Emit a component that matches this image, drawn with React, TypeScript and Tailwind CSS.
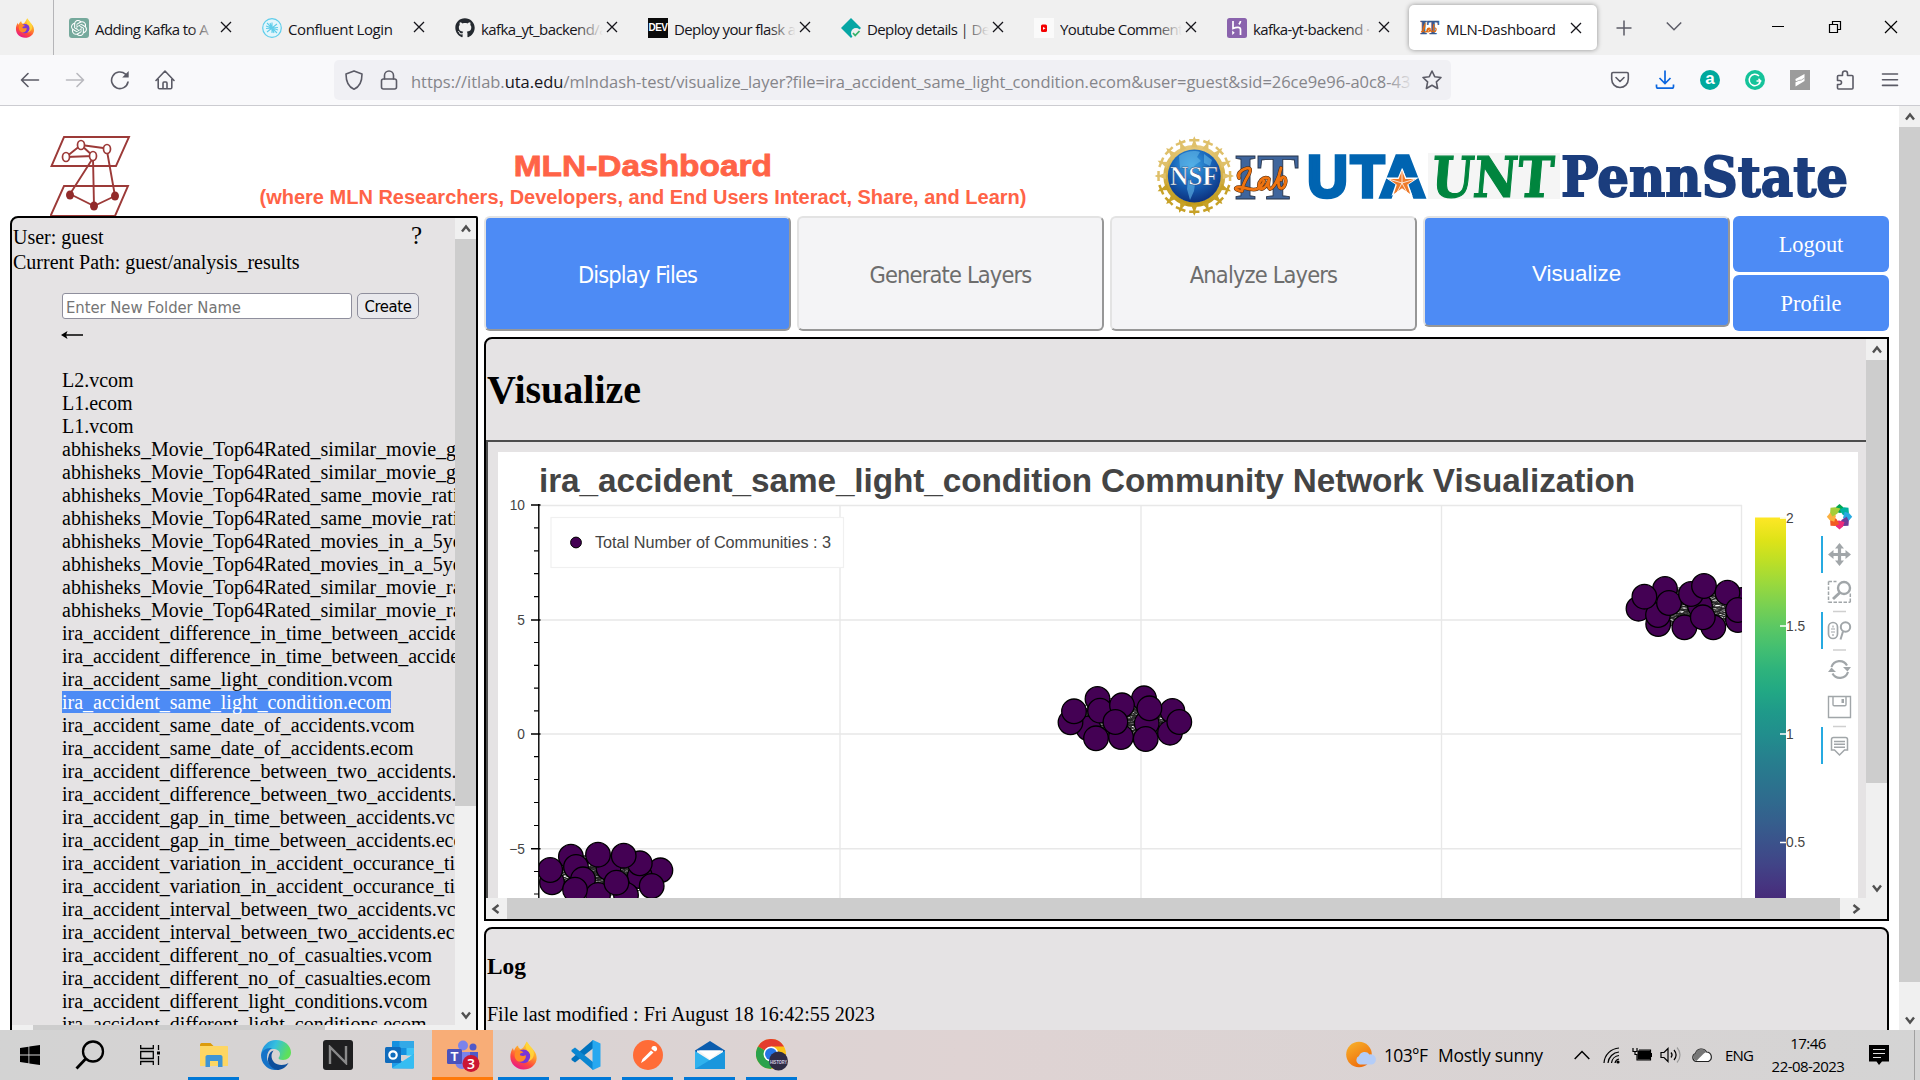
import React from "react";
import { FaGithub } from "react-icons/fa";
import { SiOpenai } from "react-icons/si";

const UI = "font-['Open_Sans','Noto_Sans',sans-serif]";
const SERIF = "font-['Liberation_Serif',serif]";
const TAHOMA = "font-['DejaVu_Sans_Condensed','DejaVu_Sans',sans-serif]";

/* ---------- shared pieces ---------- */

function Firefox({ className }: { className: string }) {
  return (
    <svg viewBox="0 0 32 32" className={className}>
      <defs>
        <linearGradient id="ffBody" x1="0.8" y1="0" x2="0.3" y2="1">
          <stop offset="0" stopColor="#ffe53f" />
          <stop offset="0.4" stopColor="#ffa12b" />
          <stop offset="0.7" stopColor="#ff4a3d" />
          <stop offset="1" stopColor="#e6168c" />
        </linearGradient>
      </defs>
      <path d="M19.5 0.5c2 2.500 3 4.500 4.500 6.500c3 3 6.500 6 6.500 12C30.500 26 24 31.500 16 31.500S1.500 25.500 1.500 17.500c0-4 1-7 3-10c0 1.500.5 2.500 1 3.200C6.500 8 8 6 10 5c0 2 1 3.500 3 4c3-.5 4.500-5 6.500-8.500z" fill="url(#ffBody)" />
      <circle cx="16" cy="17" r="7.500" fill="#7a36d8" />
      <path d="M7 12c4-3 8-1 9 1c-2 0-4 .5-4 2c0 2 5 2 6 .5c2 2-1 8-6 7.500c-5-1-7-6-5-11z" fill="#ff8a26" />
      <path d="M19.500 1c-2 5-1 8 2.500 11c3 4 1 9-2 11c5-1 9-6 7-12c-1-4-5-6-7.500-10z" fill="#ffd83c" opacity=".85" />
    </svg>
  );
}

function Chev({ dir }: { dir: "up" | "down" | "left" | "right" }) {
  const d = {
    up: "M2 8.500L6 3.500L10 8.500",
    down: "M2 3.500L6 8.500L10 3.500",
    left: "M8.500 2L3.500 6L8.500 10",
    right: "M3.500 2L8.500 6L3.500 10",
  }[dir];
  return (
    <svg viewBox="0 0 12 12" className="h-3 w-3">
      <path d={d} fill="none" stroke="#505050" strokeWidth="2.400" />
    </svg>
  );
}

/* ---------- browser chrome ---------- */

const TabX = () => (
  <svg viewBox="0 0 12 12" className="h-3 w-3 shrink-0">
    <path d="M1 1L11 11M11 1L1 11" stroke="#15141a" strokeWidth="1.300" />
  </svg>
);

function ItLabIcon() {
  return (
    <svg viewBox="0 0 20 20" className="h-5 w-5">
      <text x="0" y="16" textLength="19" lengthAdjust="spacingAndGlyphs" fontFamily="Liberation Serif" fontWeight="700" fontSize="19" fill="#35598f" stroke="#35598f" strokeWidth="0.600">IT</text>
      <path d="M1 14c4-1 4-6 4-8c-2 3-3 8 0 8c2 0 3-1 4-4c-2 0-3 4-1 4s2-3 2-4c0 3 1 4 3 3c1-2 1-5 1-7c-1 3-1 7 0 8c2 0 3-4 1-4" fill="none" stroke="#e06a10" strokeWidth="1.200" />
    </svg>
  );
}

const tabs: { title: string; icon: React.ReactNode; fade: boolean }[] = [
  {
    title: "Adding Kafka to A",
    fade: true,
    icon: (
      <span className="flex h-5 w-5 items-center justify-center rounded-[3px] bg-[#75a99c]">
        <SiOpenai className="h-4 w-4 text-white" />
      </span>
    ),
  },
  {
    title: "Confluent Login",
    fade: false,
    icon: (
      <svg viewBox="0 0 20 20" className="h-5 w-5">
        <circle cx="10" cy="10" r="9.300" fill="#e3f6fc" stroke="#5fcdea" strokeWidth="1.200" />
        <path d="M10 10L5 5M10 10L4 8M10 10L4 10.500M10 10L8 5M10 10L15 15M10 10L16 12M10 10L16 9.500M10 10L12 15M10 10l-5 4M10 10l5-4M10 10V4.500M10 10v5" stroke="#5fcdea" strokeWidth="1.100" />
      </svg>
    ),
  },
  { title: "kafka_yt_backend/a", fade: true, icon: <FaGithub className="h-5 w-5 text-[#24292f]" /> },
  {
    title: "Deploy your flask a",
    fade: true,
    icon: (
      <span className="flex h-5 w-5 items-center justify-center bg-[#0a0a0a] font-['Liberation_Sans'] text-[10px] font-bold tracking-[-0.5px] text-white">DEV</span>
    ),
  },
  {
    title: "Deploy details | De",
    fade: true,
    icon: (
      <svg viewBox="0 0 20 20" className="h-5 w-5">
        <path d="M10 0L20 10L10 20L0 10z" fill="#05a6a4" />
        <circle cx="15" cy="15" r="5" fill="#f0f0f0" />
        <path d="M12 15l2.200 2.500L18.500 13" fill="none" stroke="#35b26a" strokeWidth="1.800" />
      </svg>
    ),
  },
  {
    title: "Youtube Comment",
    fade: true,
    icon: (
      <svg viewBox="0 0 20 20" className="h-5 w-5">
        <rect width="20" height="20" fill="#fafafa" />
        <rect x="7" y="6.500" width="6" height="7.500" rx="1.500" fill="#f40000" />
        <path d="M9 9l2.500 1.300L9 11.700z" fill="#fff" />
      </svg>
    ),
  },
  {
    title: "kafka-yt-backend ·",
    fade: true,
    icon: (
      <svg viewBox="0 0 20 20" className="h-5 w-5">
        <rect width="20" height="20" rx="2.500" fill="#8a63ad" />
        <path d="M6 3v7.500c3-1.300 7.500-2 7.500 1V17M13.500 3c0 1.500-.8 2.500-1.600 3.300" fill="none" stroke="#fff" strokeWidth="1.700" />
        <path d="M5.200 12.500l2.500 2.200l-2.500 2.200z" fill="#fff" />
      </svg>
    ),
  },
];

const tabText = "whitespace-nowrap text-[15px] leading-5 text-[#15141a]";

function TabBar() {
  return (
    <div className={`flex h-[55px] bg-[#f0f0f0] ${UI}`}>
      <div className="flex w-[54px] items-center border-r border-[#b5b5b8] pl-[15px]">
        <Firefox className="h-5 w-5" />
      </div>
      <div className="flex pl-[4px]">
        {tabs.map((t) => (
          <div key={t.title} className="flex w-[193px] items-center pl-[11px]">
            {t.icon}
            <div className={`relative ml-[6px] w-[122px] overflow-hidden pt-[2px] ${t.fade ? "tracking-[-0.6px]" : "tracking-[-0.4px]"} ${tabText}`}>
              {t.title}
              {t.fade && <span className="absolute inset-y-0 right-0 w-7 bg-gradient-to-r from-transparent to-[#f0f0f0]" />}
            </div>
            <span className="-mt-px ml-[3px]">
              <TabX />
            </span>
          </div>
        ))}
        <div className="mt-[5px] flex h-[45px] w-[188px] items-center rounded-[5px] bg-white pl-[11px] shadow-[0_0_5px_rgba(0,0,0,0.4)]">
          <ItLabIcon />
          <div className={`ml-[6px] w-[124px] pt-[2px] tracking-[-0.4px] ${tabText}`}>MLN-Dashboard</div>
          <TabX />
        </div>
      </div>
      <div className="flex flex-1 items-center pl-[19px]">
        <svg viewBox="0 0 16 16" className="h-4 w-4">
          <path d="M8 0.500V15.500M.5 8H15.500" stroke="#5b5b66" strokeWidth="1.500" />
        </svg>
        <svg viewBox="0 0 16 16" className="-mt-1 ml-[34px] h-4 w-4">
          <path d="M.8 4.500L8 11.800L15.200 4.500" fill="none" stroke="#5b5b66" strokeWidth="1.500" />
        </svg>
        <svg viewBox="0 0 126 14" className="-mt-[2px] ml-[90px] h-[14px] w-[126px]">
          <path d="M0 6.500H12M113 1l12 12M125 1l-12 12" stroke="#000" strokeWidth="1.200" />
          <path d="M57.500 4.500h8v8h-8zM60.500 4V1.500h8v8H66" fill="none" stroke="#000" strokeWidth="1.200" />
        </svg>
      </div>
    </div>
  );
}

function NavBar() {
  const s = { fill: "none", stroke: "#5b5b66", strokeWidth: 1.6, strokeLinecap: "round" as const, strokeLinejoin: "round" as const };
  return (
    <div className={`flex h-[51px] items-center border-b border-[#ccccd1] bg-[#f9f9fb] ${UI}`}>
      <div className="flex w-[334px] items-center gap-[25px] pl-[20px]">
        <svg viewBox="0 0 20 20" className="h-5 w-5"><path {...s} d="M18.500 10H1.500M8 3.500L1.500 10L8 16.500" /></svg>
        <svg viewBox="0 0 20 20" className="h-5 w-5 opacity-40"><path {...s} d="M1.500 10h17M12 3.500L18.500 10L12 16.500" /></svg>
        <svg viewBox="0 0 20 20" className="h-5 w-5">
          <path {...s} d="M18 12A8.300 8.300 0 1 1 15.500 4.200" />
          <path d="M18.700 1v6.500h-6.500z" fill="#5b5b66" />
        </svg>
        <svg viewBox="0 0 20 20" className="h-5 w-5">
          <path {...s} d="M1 10.500L10 1l9 9.500M3.200 9v8.500c0 .8.500 1.300 1.300 1.300h11c.8 0 1.300-.5 1.300-1.300V9M8 18.500v-5.300c0-.8.4-1.200 1-1.200h2c.6 0 1 .4 1 1.200v5.300" />
        </svg>
      </div>
      <div className="flex h-10 w-[1117px] items-center rounded-[5px] bg-[#f0f0f4] pl-[10px]">
        <svg viewBox="0 0 20 20" className="h-5 w-5"><path {...s} d="M10 .9L18 4c0 7-2.500 13-8 15.200C4.500 17 2 11 2 4z" /></svg>
        <svg viewBox="0 0 20 20" className="ml-[15px] h-5 w-5">
          <rect {...s} x="2.500" y="9" width="15" height="10" rx="2" />
          <path {...s} d="M5.500 9V5.500a4.500 4.500 0 0 1 9 0V9" />
        </svg>
        <div className="relative ml-[12px] mt-[3px] w-[1003px] overflow-hidden whitespace-nowrap text-[16.500px] leading-6 tracking-[-0.03px] text-[#85858a]">
          https://itlab.<span className="text-[#15141a]">uta.edu</span>/mlndash-test/visualize_layer?file=ira_accident_same_light_condition.ecom&amp;user=guest&amp;sid=26ce9e96-a0c8-43
          <span className="absolute inset-y-0 right-0 w-7 bg-gradient-to-r from-transparent to-[#f0f0f4]" />
        </div>
        <svg viewBox="0 0 20 20" className="ml-[8px] h-5 w-5"><path {...s} d="M10 1l2.700 5.700l6.300.8l-4.600 4.300l1.200 6.700L10 15.300L4.400 18.500l1.200-6.700L1 7.500l6.300-.8z" /></svg>
      </div>
      <div className="flex flex-1 items-center gap-[25px] pl-[159px]">
        <svg viewBox="0 0 20 20" className="h-5 w-5">
          <path {...s} d="M3 2.500h14c.7 0 1.300.5 1.300 1.200V9c0 5-3.700 8.500-8.300 8.500S1.700 14 1.700 9V3.700C1.700 3 2.300 2.500 3 2.500zM6 7.500L10 11.500L14 7.500" />
        </svg>
        <svg viewBox="0 0 20 20" className="h-5 w-5">
          <path d="M10 .5V13M4.500 8L10 13.500L15.500 8M1.500 14.500v2c0 1 .7 1.700 1.700 1.700h13.600c1 0 1.700-.7 1.700-1.700v-2" fill="none" stroke="#0a66e0" strokeWidth="1.700" />
        </svg>
        <span className="flex h-5 w-5 items-center justify-center rounded-full bg-[#00a99d] pb-[2px] font-['Liberation_Sans'] text-[17px] font-bold leading-5 text-white">a</span>
        <svg viewBox="0 0 20 20" className="h-5 w-5">
          <circle cx="10" cy="10" r="10" fill="#15c39a" />
          <path d="M14 6A5.700 5.700 0 1 0 15.500 11H11.500M13.500 8.800l2.200 2.200l-1.700 2.500" fill="none" stroke="#fff" strokeWidth="1.500" />
        </svg>
        <svg viewBox="0 0 20 20" className="h-5 w-5">
          <rect width="20" height="20" fill="#9c9c9c" />
          <path d="M14.500 4v4.500L8 12.500L5.500 10.500V9zM14.500 8v3L5.500 16.500V12z" fill="#fff" />
          <path d="M5.500 12l3-1.500l3-.5l3-2" stroke="#9c9c9c" strokeWidth="0.800" fill="none" />
        </svg>
        <svg viewBox="0 0 20 20" className="h-5 w-5">
          <path {...s} d="M7.500 5.500V3.500a2.500 2.500 0 0 1 5 0v2h4.500c.7 0 1 .4 1 1V18c0 .7-.4 1-1 1H3.500c-.6 0-1-.3-1-1v-3.500h2a2 2 0 0 0 0-4h-2V6.500c0-.6.400-1 1-1z" />
        </svg>
        <svg viewBox="0 0 20 20" className="h-5 w-5"><path {...s} d="M2.500 4h15M2.500 9.700h15M2.500 15.400h15" /></svg>
      </div>
    </div>
  );
}

/* ---------- page header ---------- */

function MlnLogo() {
  return (
    <svg viewBox="50 135 82 82" className="h-[82px] w-[82px]">
      <g fill="none" stroke="#9c3a38" strokeWidth="1.900">
        <path d="M64 137h65l-13 29H51.500zM64 186h64l-13 30H50.500z" />
        <path d="M81 145l26 3.500M81 145l-15 12M81 145l12 11M66 157l27-1M93 158L70 194M93 158l1 48M107 151l8 45M70 194l24 12l21-10" />
      </g>
      <g fill="#fff" stroke="#9c3a38" strokeWidth="1.700">
        <ellipse cx="81" cy="145" rx="3.500" ry="4.500" />
        <ellipse cx="107" cy="149" rx="3.500" ry="4.500" />
        <ellipse cx="66" cy="157" rx="3.500" ry="4.500" />
        <ellipse cx="93" cy="156" rx="3.500" ry="4.500" />
      </g>
      <g fill="#922b2b">
        <ellipse cx="70" cy="195" rx="4" ry="4.500" />
        <ellipse cx="94" cy="206" rx="4" ry="4.500" />
        <ellipse cx="115" cy="196" rx="4" ry="4.500" />
      </g>
    </svg>
  );
}

function SponsorLogos() {
  const spokes = Array.from({ length: 16 }, (_, i) => i * 22.5);
  return (
    <svg viewBox="1150 130 710 86" className="h-[86px] w-[710px]">
      <defs>
        <radialGradient id="globe" cx="0.45" cy="0.3" r="0.75">
          <stop offset="0" stopColor="#3ba4e4" />
          <stop offset="0.5" stopColor="#1763b8" />
          <stop offset="1" stopColor="#0b2a75" />
        </radialGradient>
        <linearGradient id="gold" x1="0" y1="0" x2="0" y2="1">
          <stop offset="0" stopColor="#e6c878" />
          <stop offset="1" stopColor="#c09a18" />
        </linearGradient>
      </defs>
      <circle cx="1194.300" cy="176" r="28.500" fill="none" stroke="url(#gold)" strokeWidth="5" />
      {spokes.map((a) => (
        <g key={a} transform={`rotate(${a} 1194.300 176)`} fill={a > 90 && a < 270 ? "#c7a127" : "#dfc06a"}>
          <path d="M1191 147.500l2.200-6h-4l0-2.500h3.800l1.300-2.700l1.300 2.700h3.800v2.500h-4l2.200 6z" />
        </g>
      ))}
      <circle cx="1194.300" cy="176" r="26.500" fill="url(#globe)" />
      <path d="M1179 156c6-5 16-6 21-4l-3 5l4 4l-6 4l-4 6l-5-4l-6 1z M1204 154l8 6l-2 6l-6-3zM1188 180l7 4l-1 7l-4 9l-3-11z" fill="#62b8e8" opacity=".6" />
      <text x="1170" y="185" textLength="48" lengthAdjust="spacingAndGlyphs" fontFamily="Liberation Serif" fontWeight="700" fontSize="28" fill="#fff" stroke="#23477f" strokeWidth="0.500">NSF</text>
      <text x="1234" y="198.500" textLength="23" lengthAdjust="spacingAndGlyphs" fontFamily="Liberation Serif" fontWeight="700" fontSize="65" fill="#3f659c" stroke="#27344a" strokeWidth="0.900">I</text>
      <text x="1257" y="198.500" textLength="42" lengthAdjust="spacingAndGlyphs" fontFamily="Liberation Serif" fontWeight="700" fontSize="65" fill="#3f659c" stroke="#27344a" strokeWidth="0.900">T</text>
      <g fill="none" stroke="#4a2a12" strokeWidth="3.800" strokeLinecap="round" strokeLinejoin="round">
        <path d="M1239 178c-3-6 8-12 11-9c2 4-7 11-8 22c-4 0-7-2-6-3c4-4 14 4 21 1c4-2 6-5 7-8M1268 178c-5-2-10 4-9 9c2 5 8 0 10-8c-1 5-1 9 1 10c4-1 9-11 11-21c-2 5-4 18-1 20c4 2 7-6 5-10c-2-2-4 0-4 2" />
      </g>
      <g fill="none" stroke="#ef7410" strokeWidth="2.800" strokeLinecap="round" strokeLinejoin="round">
        <path d="M1239 178c-3-6 8-12 11-9c2 4-7 11-8 22c-4 0-7-2-6-3c4-4 14 4 21 1c4-2 6-5 7-8M1268 178c-5-2-10 4-9 9c2 5 8 0 10-8c-1 5-1 9 1 10c4-1 9-11 11-21c-2 5-4 18-1 20c4 2 7-6 5-10c-2-2-4 0-4 2" />
      </g>
      <g fontFamily="Liberation Sans" fontWeight="700" fill="#0064b1" stroke="#0064b1" strokeWidth="3.500">
        <text x="1307" y="197" textLength="41" lengthAdjust="spacingAndGlyphs" fontSize="60">U</text>
        <text x="1350.500" y="197" textLength="34" lengthAdjust="spacingAndGlyphs" fontSize="60">T</text>
        <text x="1379.500" y="197" textLength="46" lengthAdjust="spacingAndGlyphs" fontSize="60">A</text>
      </g>
      <path d="M1402 168l4 9.500h13l-10.500 7l4 11.500l-10.500-7l-10.500 7l4-11.500l-10.500-7h13z" fill="#fff" />
      <path d="M1402 170.500l3.300 8.500h9.700l-7.800 5.700l3 9.300l-8.200-5.700l-8.200 5.700l3-9.300l-7.800-5.700h9.700z" fill="#ee7b2b" />
      <path d="M1402 171.500V183l5 9.500M1402 183l12-3.600M1402 183l-12-3.600M1402 183l-5 9.500" stroke="#fff" strokeWidth="0.800" fill="none" />
      <rect x="1428" y="153" width="132" height="46" fill="#f5f5f5" />
      <g transform="translate(1430 196.500) skewX(-5)">
        <text x="0" y="0" textLength="122" lengthAdjust="spacingAndGlyphs" fontFamily="DejaVu Serif" fontWeight="700" fontSize="56" fill="#00853e" stroke="#00853e" strokeWidth="1.200">UNT</text>
      </g>
      <text x="1561" y="196" textLength="287" lengthAdjust="spacingAndGlyphs" fontFamily="DejaVu Serif" fontWeight="700" fontSize="55" fill="#1b3d7d" stroke="#1b3d7d" strokeWidth="1.800">PennState</text>
    </svg>
  );
}

function PageHeader() {
  return (
    <div className="flex h-[110px] shrink-0 items-start font-['Liberation_Sans',sans-serif] font-bold text-[#ff6347]">
      <div className="ml-[50px] mt-[29px] h-[81px] w-[82px]">
        <MlnLogo />
      </div>
      <div className="ml-[111px] flex w-[800px] flex-col items-center whitespace-nowrap pt-[42px]">
        <div className="origin-center scale-x-[1.115] text-[30px] leading-[36px] [-webkit-text-stroke:0.800px_#ff6347]">MLN-Dashboard</div>
        <div className="mt-px text-[20px] leading-6">(where MLN Researchers, Developers, and End Users Interact, Share, and Learn)</div>
      </div>
      <div className="ml-[107px] mt-[24px]">
        <SponsorLogos />
      </div>
    </div>
  );
}

/* ---------- sidebar ---------- */

const files = [
  "L2.vcom",
  "L1.ecom",
  "L1.vcom",
  "abhisheks_Movie_Top64Rated_similar_movie_genres.vcom",
  "abhisheks_Movie_Top64Rated_similar_movie_genres.ecom",
  "abhisheks_Movie_Top64Rated_same_movie_ratings.vcom",
  "abhisheks_Movie_Top64Rated_same_movie_ratings.ecom",
  "abhisheks_Movie_Top64Rated_movies_in_a_5year_gap.vcom",
  "abhisheks_Movie_Top64Rated_movies_in_a_5year_gap.ecom",
  "abhisheks_Movie_Top64Rated_similar_movie_ratings.vcom",
  "abhisheks_Movie_Top64Rated_similar_movie_ratings.ecom",
  "ira_accident_difference_in_time_between_accidents.vcom",
  "ira_accident_difference_in_time_between_accidents.ecom",
  "ira_accident_same_light_condition.vcom",
  "ira_accident_same_light_condition.ecom",
  "ira_accident_same_date_of_accidents.vcom",
  "ira_accident_same_date_of_accidents.ecom",
  "ira_accident_difference_between_two_accidents.vcom",
  "ira_accident_difference_between_two_accidents.ecom",
  "ira_accident_gap_in_time_between_accidents.vcom",
  "ira_accident_gap_in_time_between_accidents.ecom",
  "ira_accident_variation_in_accident_occurance_time.vcom",
  "ira_accident_variation_in_accident_occurance_time.ecom",
  "ira_accident_interval_between_two_accidents.vcom",
  "ira_accident_interval_between_two_accidents.ecom",
  "ira_accident_different_no_of_casualties.vcom",
  "ira_accident_different_no_of_casualties.ecom",
  "ira_accident_different_light_conditions.vcom",
  "ira_accident_different_light_conditions.ecom",
];

function Sidebar() {
  return (
    <aside className={`flex h-[840px] w-[468px] shrink-0 flex-col overflow-hidden rounded-tl-[8px] rounded-tr-[2px] border-2 border-black bg-[#e5e3e4] text-[20px] text-black ${SERIF}`}>
      <div className="flex h-[807px] shrink-0">
        <div className="w-[443px] overflow-hidden whitespace-nowrap pl-px">
          <div className="flex h-[75px] justify-between pt-[7px]">
            <div className="leading-[25px]">
              <div>User: guest</div>
              <div>Current Path: guest/analysis_results</div>
            </div>
            <div className="-mt-[3px] pr-[33px] text-[25px] leading-[28px]">?</div>
          </div>
          <div className={`ml-[49px] flex h-[26px] gap-[5px] text-[16.500px] ${TAHOMA}`}>
            <div className="w-[290px] rounded-[3px] border border-[#8f8f9d] bg-white pl-[3px] pt-px leading-[25px] tracking-[-0.05px] text-[#757575]">Enter New Folder Name</div>
            <button className="w-[62px] rounded-[5px] border border-[#8f8f9d] bg-[#e9e9ed] pt-[2px] leading-[22px] tracking-[-0.4px]">Create</button>
          </div>
          <svg viewBox="0 0 22 10" className="ml-[48px] mt-[11px] h-[10px] w-[22px]">
            <path d="M22 5H3" stroke="#000" strokeWidth="1.500" />
            <path d="M0 5L6.500 1L5 5L6.500 9z" fill="#000" />
          </svg>
          <ul className="mt-[29px] pl-[49px] leading-[23px]">
            {files.map((f) => (
              <li key={f} className="h-[23px]">
                {f === "ira_accident_same_light_condition.ecom" ? <span className="bg-[#4d8bf5] text-white">{f}</span> : f}
              </li>
            ))}
          </ul>
        </div>
        <div className="flex w-[21px] flex-col items-center bg-[#f0f0f0]">
          <div className="flex h-[21px] items-center"><Chev dir="up" /></div>
          <div className="h-[567px] w-full bg-[#cdcdcd]" />
          <div className="mt-[203px]"><Chev dir="down" /></div>
        </div>
      </div>
      <div className="h-[21px] shrink-0 bg-[#f0f0f0] pl-[21px]">
        <div className="h-full w-[292px] bg-[#cdcdcd]" />
      </div>
    </aside>
  );
}

/* ---------- step buttons ---------- */

function StepButtons() {
  const base = "w-[307px] rounded-[6px] border-2 border-t-[#e3e3e3] border-l-[#e3e3e3] border-b-[#979797] border-r-[#979797]";
  const blue = "bg-[#4d8bf5] text-white";
  const gray = "bg-[#f4f4f6] text-[#6d6d6d]";
  const side = `flex h-[56px] items-center justify-center rounded-[6px] pt-[2px] text-[22.4px] ${SERIF} ${blue}`;
  return (
    <div className="flex h-[115px] items-start">
      <div className={`flex gap-[6px] text-[23.400px] tracking-[-0.850px] ${TAHOMA}`}>
        <button className={`h-[115px] pt-[4px] ${base} ${blue}`}>Display Files</button>
        <button className={`h-[115px] pt-[4px] ${base} ${gray}`}>Generate Layers</button>
        <button className={`h-[115px] pt-[4px] ${base} ${gray}`}>Analyze Layers</button>
        <button className={`h-[111px] pt-[5px] font-['Liberation_Sans'] text-[22.4px] tracking-normal ${base} ${blue}`}>Visualize</button>
      </div>
      <div className="ml-[3px] flex w-[156px] flex-col gap-[3px]">
        <div className={side}>Logout</div>
        <div className={side}>Profile</div>
      </div>
    </div>
  );
}

/* ---------- chart ---------- */

type Pt = [number, number];

const clusters: Pt[][] = [
  [[1097.5, 699], [1144, 698.3], [1172.4, 711], [1088.4, 728.3], [1070.5, 722.3], [1074, 711.3], [1100, 710.7], [1122, 705.3], [1146.7, 723.3], [1149.4, 708.3], [1121, 737], [1115.4, 722], [1096, 738.3], [1145.7, 739], [1170, 732.7], [1179.3, 722]],
  [[570.9, 856.7], [552, 882.3], [550.2, 870], [576, 867], [608.5, 868], [598, 854.7], [660.4, 870.3], [639.8, 876], [639.8, 863.3], [623.7, 855.7], [583, 879.3], [598, 895], [575, 889.7], [626, 895], [616.4, 882.7], [651.7, 886]],
  [[1665, 589], [1638.5, 608.7], [1658.2, 624], [1658, 615], [1644.4, 596.7], [1669, 603], [1700, 606], [1691, 594], [1704, 586], [1742, 600], [1727.5, 592.7], [1738, 620], [1738, 610], [1684.4, 627.3], [1713.3, 627.3], [1702.8, 617.3]],
];

const viridis = ["#fde725", "#dfe318", "#bddf26", "#9bd93c", "#7ad151", "#5cc863", "#43bf71", "#2eb37c", "#22a884", "#1f998a", "#218e8d", "#26818e", "#2a768e", "#2f6b8e", "#355f8d", "#3b528b", "#414487", "#463480", "#482475", "#471365", "#440154"];

const bokehPetals = ["#00a651", "#00b2a0", "#27aae1", "#6e3b97", "#ee2a7b", "#f15a22", "#fbb040", "#a5cd39"];

function Chart() {
  return (
    <svg viewBox="498 452 1360 446" className="block h-[446px] w-[1360px] bg-white" fontFamily="Liberation Sans, sans-serif" fill="#444">
      <defs>
        <clipPath id="plot"><rect x="539" y="505" width="1203" height="400" /></clipPath>
        <linearGradient id="viridis" gradientUnits="userSpaceOnUse" x1="0" y1="518" x2="0" y2="951">
          {viridis.map((c, i) => <stop key={c} offset={i / 20} stopColor={c} />)}
        </linearGradient>
      </defs>
      <text x="539" y="492" textLength="1096" fontSize="33.300" fontWeight="700">ira_accident_same_light_condition Community Network Visualization</text>
      <path d="M840 505V898M1141 505V898M1441.500 505V898M1741.500 505V898M539 505.500H1742M539 620H1742M539 734H1742M539 848.700H1742" stroke="#e8e8e8" strokeWidth="1.400" fill="none" />
      {clusters.map((c, k) => (
        <g key={k} clipPath="url(#plot)">
          {c.map(([x, y], i) => c.slice(i + 1).map(([a, b], j) => <line key={`${i}-${j}`} x1={x} y1={y} x2={a} y2={b} stroke="#222" strokeWidth="0.900" />))}
          {c.map(([x, y]) => <circle key={`${x}${y}`} cx={x} cy={y} r="12.300" fill="#440154" stroke="#000" strokeWidth="1.300" />)}
        </g>
      ))}
      <path d="M538.800 504V898M531 505H540.500M531 620H540.500M531 734H540.500M531 848.700H540.500" stroke="#000" strokeWidth="1.400" />
      <path d="M534 527.900h5M534 550.800h5M534 573.700h5M534 596.600h5M534 642.500h5M534 665.300h5M534 688.100h5M534 710.900h5M534 756.600h5M534 779.500h5M534 802.500h5M534 825.500h5M534 871.500h5M534 894h5" stroke="#000" strokeWidth="1.200" />
      <g fontSize="13.750" textAnchor="end">
        <text x="525" y="510">10</text>
        <text x="525" y="624.500">5</text>
        <text x="525" y="739">0</text>
        <text x="525" y="853.500">−5</text>
      </g>
      <rect x="551" y="517.500" width="292.500" height="50" fill="#fff" fillOpacity=".95" stroke="#f0f0f0" strokeWidth="1.200" />
      <circle cx="576" cy="542.500" r="5.400" fill="#440154" stroke="#000" />
      <text x="595" y="548" fontSize="16.250" textLength="236">Total Number of Communities : 3</text>
      <rect x="1755" y="517.500" width="31" height="381" fill="url(#viridis)" />
      <path d="M1780 518h6M1780 626h6M1780 734h6M1780 842.500h6" stroke="#fff" strokeWidth="1.300" />
      <g fontSize="13.750">
        <text x="1786" y="523">2</text>
        <text x="1786" y="630.500">1.5</text>
        <text x="1786" y="738.500">1</text>
        <text x="1786" y="846.500">0.5</text>
      </g>
      {bokehPetals.map((c, i) => (
        <path key={c} d="M1834.500 511.500l1.500-4.500l3.500-3l3.500 3l3 4.500l-6 1.500z" fill={c} transform={`rotate(${i * 45} 1839.500 516.700)`} />
      ))}
      <path d="M1822 536v37M1822 612v37M1822 727v37" stroke="#26aae1" strokeWidth="2" />
      <path d="M1833 611.500h13M1833 650h13M1833 726.500h13" stroke="#cfcfcf" strokeWidth="1.300" />
      <g fill="none" stroke="#a1a6a9" strokeWidth="2.600">
        <path d="M1839.500 547v15M1832 554.500h15" strokeWidth="3.200" />
        <path d="M1839.500 543l-4.500 5.500h9zM1839.500 566l-4.500-5.500h9zM1828 554.500l5.500-4.500v9zM1851 554.500l-5.500-4.500v9z" fill="#a1a6a9" stroke="none" />
        <path d="M1828.500 581.500h8M1828.500 581.500v21M1828.500 602.300h22M1850.300 602v-9" strokeWidth="1.500" strokeDasharray="3.500 1.500" />
        <circle cx="1844" cy="588" r="6" strokeWidth="2.400" />
        <path d="M1840 592.500l-7 6.500" strokeWidth="3" />
        <rect x="1828.500" y="622.500" width="9" height="16" rx="4.500" strokeWidth="1.700" />
        <path d="M1831 629h4M1831 632h4M1833 625.500v2M1833 634v2" strokeWidth="1.200" />
        <circle cx="1845.500" cy="627" r="4.700" strokeWidth="2" />
        <path d="M1843 631.500l-2.500 8" strokeWidth="2" />
        <path d="M1831.500 667a8.500 8.500 0 0 1 15.500-1.500M1848 672a8.500 8.500 0 0 1-15.500 1.500" strokeWidth="2.200" />
        <path d="M1843 667h8l-3.500 4.500zM1836 672h-8l3.500-4.500z" fill="#a1a6a9" stroke="none" />
        <path d="M1828.500 696.500h22v21h-22zM1833 697v7.500c0 .8.500 1.200 1.200 1.200h10.600c.8 0 1.200-.5 1.200-1.200v-7.500" strokeWidth="1.400" />
        <rect x="1841.500" y="699" width="2.500" height="4" fill="#a1a6a9" stroke="none" />
        <path d="M1833.500 737.500h12c1.200 0 2 .7 2 2v10.500h-3l-5 5l-5-5h-3v-10.500c0-1.300.8-2 2-2z" strokeWidth="1.500" />
        <path d="M1834 741.500h11M1834 744.300h11M1834 747.200h11" strokeWidth="1.500" />
      </g>
    </svg>
  );
}

function VisualizePanel() {
  return (
    <section className="mt-[6px] h-[584px] rounded-tl-[8px] border-2 border-black bg-[#e5e3e4]">
      <div className="flex h-[559px]">
        <div className="w-[1380px] overflow-hidden">
          <h1 className={`h-[101px] pl-px pt-[28px] text-[40px] font-bold leading-[46px] text-black ${SERIF}`}>Visualize</h1>
          <div className="h-[458px] border-l-2 border-t-2 border-[#4d4d4d] pl-[10px] pt-[10px]">
            <Chart />
          </div>
        </div>
        <div className="flex w-[21px] flex-col items-center bg-[#f0f0f0]">
          <div className="flex h-[21px] items-center"><Chev dir="up" /></div>
          <div className="h-[423px] w-full bg-[#cdcdcd]" />
          <div className="mt-[99px]"><Chev dir="down" /></div>
        </div>
      </div>
      <div className="flex h-[21px] items-center bg-[#f0f0f0] pl-[4px]">
        <Chev dir="left" />
        <div className="ml-[5px] h-full w-[1333px] bg-[#cdcdcd]" />
        <span className="ml-[10px]"><Chev dir="right" /></span>
      </div>
    </section>
  );
}

/* ---------- taskbar ---------- */

const under = "border-b-[3px] border-[#0078d7]";

function TaskIcon({ w = "w-[51px]", active, children }: { w?: string; active?: boolean; children: React.ReactNode }) {
  return <div className={`flex h-[50px] items-center justify-center ${w} ${active ? `${under} pt-[3px]` : ""}`}>{children}</div>;
}

function TaskApps() {
  return (
    <div className="flex">
      <TaskIcon w="w-[60px]">
        <svg viewBox="0 0 20 20" className="h-5 w-5"><path d="M0 3l8.500-1.300V9.600H0zM9.300 1.500L20 0v9.600H9.300zM0 10.400h8.500v7.900L0 17zM9.300 10.400H20V20L9.300 18.500z" /></svg>
      </TaskIcon>
      <TaskIcon w="w-[60px]">
        <svg viewBox="0 0 30 30" className="h-[30px] w-[30px]"><circle cx="18" cy="11.500" r="10" fill="none" stroke="#000" strokeWidth="2.300" /><path d="M11 18.500L1.500 28.500" stroke="#000" strokeWidth="2.800" /></svg>
      </TaskIcon>
      <TaskIcon w="w-[60px]">
        <svg viewBox="0 0 20 20" className="h-5 w-5"><path d="M.7 0v3.500h12.600V0M.7 6.500h12.600v7H.7zM.7 20v-3.500h12.600V20M18.500 0v5M18.500 11v9" fill="none" stroke="#000" strokeWidth="1.300" /><rect x="17" y="6.500" width="3" height="3" /></svg>
      </TaskIcon>
      <div className="ml-[8px] flex gap-[11px]">
        <TaskIcon active>
          <svg viewBox="0 0 30 26" className="h-[26px] w-[30px]"><path d="M1 3c0-1 .5-2 1.500-2h9l3 3H1z" fill="#dc9b0b" /><path d="M1 4h27c.7 0 1 .5 1 1v19H1z" fill="#fdd663" /><path d="M6.500 25V15c0-1 .7-2 2-2h13c1.300 0 2 1 2 2v10h-4.500v-6h-8v6z" fill="#3e95d6" /></svg>
        </TaskIcon>
        <TaskIcon>
          <svg viewBox="0 0 30 30" className="h-[30px] w-[30px]">
            <defs>
              <linearGradient id="edgeTop" x1="0" y1="0" x2="1" y2="0.300"><stop offset="0" stopColor="#1c86dc" /><stop offset="0.500" stopColor="#35bfe0" /><stop offset="1" stopColor="#5ee05a" /></linearGradient>
            </defs>
            <path d="M0 15C1 6 7 0 15 0c9 0 15 6 15 12.500c0 4.500-3.500 7.500-8 7.500c-3 0-4.500-1-4.500-2c0-.8 1.500-1.500 1.500-4c0-3-3-5-7-5c-7 0-11.500 3-12 6z" fill="url(#edgeTop)" />
            <path d="M0 15c.5-4.500 5-7.500 11-7c-3 2-5 5-5 9c0 6 5 10.500 11 13C7 31 0 24 0 15z" fill="#1673c8" />
            <path d="M10.500 16c0 5 4 9 10 9c3 0 5-1 7-2c-2.500 4.500-7 7-11.500 7C9 28 5.500 22 7.500 16.500C8 13 10 11 12.500 10.500c-1 1.500-2 3-2 5.500z" fill="#0d4f9c" />
          </svg>
        </TaskIcon>
        <TaskIcon>
          <span className="flex h-[30px] w-[30px] items-center justify-center rounded-[3px] bg-[#1f1f20]">
            <svg viewBox="0 0 20 20" className="h-5 w-5"><path d="M2 19V2l16 16V1" fill="none" stroke="#8a8a8a" strokeWidth="2.400" /></svg>
          </span>
        </TaskIcon>
        <TaskIcon>
          <svg viewBox="0 0 30 28" className="h-7 w-[30px]"><path d="M8 0h20c.6 0 1 .4 1 1v13H7V1c0-.6.4-1 1-1z" fill="#1490df" /><path d="M14.500 0H29v7H14.500z" fill="#32a9e7" /><path d="M7 7h8v7H7z" fill="#0364b8" /><path d="M21.500 7H29v8h-7.500z" fill="#50d9ff" opacity=".7" /><path d="M7 13l11 8l11-8v13c0 1-.6 1.500-1.500 1.500h-19C7.600 27.500 7 27 7 26z" fill="#1c9be8" /><path d="M7 27l22-14v13c0 1-.6 1.500-1.500 1.500z" fill="#36bdf2" /><rect y="6" width="16" height="16" rx="1.500" fill="#0f6cbd" /><circle cx="8" cy="14" r="3.700" fill="none" stroke="#fff" strokeWidth="2.200" /></svg>
        </TaskIcon>
      </div>
      <div className="ml-[7px] flex h-[50px] w-[61px] items-center justify-center border-b-[3px] border-[#ff7a0a] bg-[#f8ad77]">
        <svg viewBox="0 0 34 32" className="mt-1 h-8 w-[34px]"><circle cx="17" cy="5.500" r="5" fill="#7b83eb" /><circle cx="27" cy="7" r="3.500" fill="#5059c9" /><path d="M20 12h12v8c0 4-3 6-6 6z" fill="#5059c9" /><path d="M9 12h15v9c0 5-4 8-8 8s-7-3-7-8z" fill="#7b83eb" /><rect x="1" y="9" width="15" height="15" rx="1.500" fill="#4b53bc" /><text x="8.500" y="21" textAnchor="middle" fontFamily="Liberation Sans" fontWeight="700" fontSize="13" fill="#fff">T</text><circle cx="25" cy="23.500" r="8.500" fill="#cc1633" /><text x="25" y="28.500" textAnchor="middle" fontFamily="Open Sans" fontWeight="600" fontSize="14" fill="#fff">3</text></svg>
      </div>
      <div className="ml-[5px] flex gap-[11px]">
        <TaskIcon active><Firefox className="h-[29px] w-[29px]" /></TaskIcon>
        <TaskIcon active>
          <svg viewBox="0 0 30 30" className="h-[30px] w-[30px]"><path d="M22 0L22.500 8L4 22.500L.5 20v-1.500z" fill="#0072bd" /><path d="M22 30v-8L4 7.500L.5 10v1.500z" fill="#0a86d1" /><path d="M22 0l7.500 3.500v23L22 30c-.5 0-.5 0-.5-1V1c0-1 0-1 .5-1z" fill="#27a8f0" /></svg>
        </TaskIcon>
        <TaskIcon active>
          <svg viewBox="0 0 30 30" className="h-[30px] w-[30px]"><circle cx="15" cy="15" r="15" fill="#ff6c37" /><path d="M8 23l1.500-4L18 10.500l2.500 2L12 20.500zM18.500 9a2.800 2.800 0 1 1 3.500 2.500z" fill="#fff" /></svg>
        </TaskIcon>
        <TaskIcon active>
          <svg viewBox="0 0 30 28" className="h-7 w-[30px]"><path d="M0 9.500L15 0l15 9.500v3H0z" fill="#0b5cad" /><path d="M2 9.500h26V16L15 22L2 16z" fill="#f3f3f3" /><path d="M0 10l15 9.500L30 10v18H0z" fill="#2fb2ee" /><path d="M0 28L30 10v18z" fill="#1a96dd" /><path d="M4 9.500h22l-11 8.800z" fill="#fff" /></svg>
        </TaskIcon>
        <TaskIcon active>
          <svg viewBox="0 0 32 32" className="h-8 w-8"><circle cx="15" cy="15" r="15" fill="#fbc116" /><path d="M15 15L2 7.500A15 15 0 0 1 28 7.500H15z" fill="#e33b2e" /><path d="M15 15L2 7.500A15 15 0 0 0 15 30l6-11z" fill="#2ba24c" /><circle cx="15" cy="15" r="7.500" fill="#fff" /><circle cx="15" cy="15" r="6" fill="#2474e5" /><circle cx="22.500" cy="22" r="9.500" fill="#2e2b45" /><text x="22.500" y="24.500" textAnchor="middle" textLength="17" lengthAdjust="spacingAndGlyphs" fontFamily="Liberation Sans" fontWeight="700" fontSize="6" fill="#d5cfe6">HISTORY</text></svg>
        </TaskIcon>
      </div>
    </div>
  );
}

function Tray() {
  return (
    <div className="flex h-[50px] items-center text-black">
      <svg viewBox="0 0 30 28" className="h-7 w-[30px]">
        <defs><linearGradient id="sun" x1="0" y1="0" x2="0.600" y2="1"><stop offset="0" stopColor="#f8b52c" /><stop offset="1" stopColor="#ef6c0b" /></linearGradient></defs>
        <circle cx="13" cy="13.500" r="12.800" fill="url(#sun)" />
        <path d="M14 23.500a4.500 4.500 0 0 1-1-8.500a6 6 0 0 1 10.500-1.500a5 5 0 0 1 2.500 10z" fill="#b4cdf8" />
      </svg>
      <div className="ml-[8px] w-[54px] whitespace-nowrap text-[17.500px] tracking-[-0.650px]">103°F</div>
      <div className="w-[125px] whitespace-nowrap text-[17.500px] tracking-[-0.250px]">Mostly sunny</div>
      <svg viewBox="0 0 16 10" className="ml-[11px] h-[10px] w-4"><path d="M.7 9L8 1.500L15.300 9" fill="none" stroke="#000" strokeWidth="1.500" /></svg>
      <svg viewBox="0 0 18 18" className="ml-[13px] h-[18px] w-[18px]"><g fill="none" stroke="#000" strokeWidth="1.200"><path d="M1 17A16 16 0 0 1 16 2M5 17A12 12 0 0 1 16 6M8.500 17A8.500 8.500 0 0 1 16 9.500M12 17a5 5 0 0 1 4-4" /></g><circle cx="15" cy="16" r="1.600" /></svg>
      <svg viewBox="0 0 20 14" className="ml-[11px] h-[14px] w-5"><path d="M5.500 2.500h12.500v9H5.500z" /><path d="M5 6v6h13.500v-10H7M1 0v3.500h4V0M3 3.500v3h2M19.500 5v4" fill="none" stroke="#000" strokeWidth="1.200" /></svg>
      <svg viewBox="0 0 22 18" className="ml-[8px] h-[18px] w-[22px]"><path d="M1 6.500h3L8 2.500v13L4 11.500H1zM11 6.500c1.300 1.500 1.300 3.500 0 5M14 4c2.500 3 2.500 7 0 10" fill="none" stroke="#000" strokeWidth="1.200" /><path d="M17 1.500c4 4.500 4 10.500 0 15" fill="none" stroke="#999" strokeWidth="1.200" /></svg>
      <svg viewBox="0 0 22 16" className="ml-[9px] h-4 w-[22px]"><path d="M5 14.500a4.200 4.200 0 0 1-.5-8A6 6 0 0 1 15.500 5a5 5 0 0 1 2 9.500z" fill="#fff" stroke="#222" strokeWidth="1.200" /><path d="M4.500 6.500A6 6 0 0 1 15.500 5c-3 1-6 5-10 9a4 4 0 0 1-1-7.500z" fill="#777" /></svg>
      <div className="ml-[12px] w-[30px] text-[15px] tracking-[-0.800px]">ENG</div>
      <div className="ml-[4px] flex h-[50px] w-[98px] flex-col items-center pt-[2px] text-[15px] leading-[23px] tracking-[-0.550px]">
        <span>17:46</span>
        <span>22-08-2023</span>
      </div>
      <svg viewBox="0 0 20 20" className="ml-[12px] h-5 w-5"><path d="M0 0h20v16.500h-7L10 20L7.500 16.500H0z" /><path d="M4 4.500h12M4 8.500h12M4 12.500h8" stroke="#ddd" strokeWidth="1.200" /></svg>
      <div className="ml-[25px] mr-[5px] h-[50px] w-px bg-[#a0a0a0]" />
    </div>
  );
}

export default function App() {
  return (
    <div className="flex h-[1080px] w-[1920px] flex-col overflow-hidden bg-white">
      <TabBar />
      <NavBar />
      <div className="flex h-[924px] shrink-0 overflow-hidden">
        <main className="flex h-full w-[1899px] flex-col overflow-hidden">
          <PageHeader />
          <div className="flex gap-[6px] pl-[10px]">
            <Sidebar />
            <div className="w-[1405px]">
              <StepButtons />
              <VisualizePanel />
              <section className={`mt-[6px] h-[160px] rounded-t-[8px] border-2 border-black bg-[#e5e3e4] text-black ${SERIF}`}>
                <h3 className="pl-px pt-[23px] text-[23.400px] font-bold leading-[28px]">Log</h3>
                <p className="pl-px pt-[22px] text-[20px] leading-[25px]">File last modified : Fri August 18 16:42:55 2023</p>
              </section>
            </div>
          </div>
        </main>
        <div className="flex w-[21px] flex-col items-center bg-[#f0f0f0]">
          <div className="flex h-[21px] items-center"><Chev dir="up" /></div>
          <div className="h-[855px] w-full bg-[#cdcdcd]" />
          <div className="mt-[32px]"><Chev dir="down" /></div>
        </div>
      </div>
      <footer className={`flex h-[50px] shrink-0 justify-between bg-gradient-to-r from-[#d3d3d3] via-[#dfd3d3] to-[#d4d4d4] ${UI}`}>
        <TaskApps />
        <Tray />
      </footer>
    </div>
  );
}
